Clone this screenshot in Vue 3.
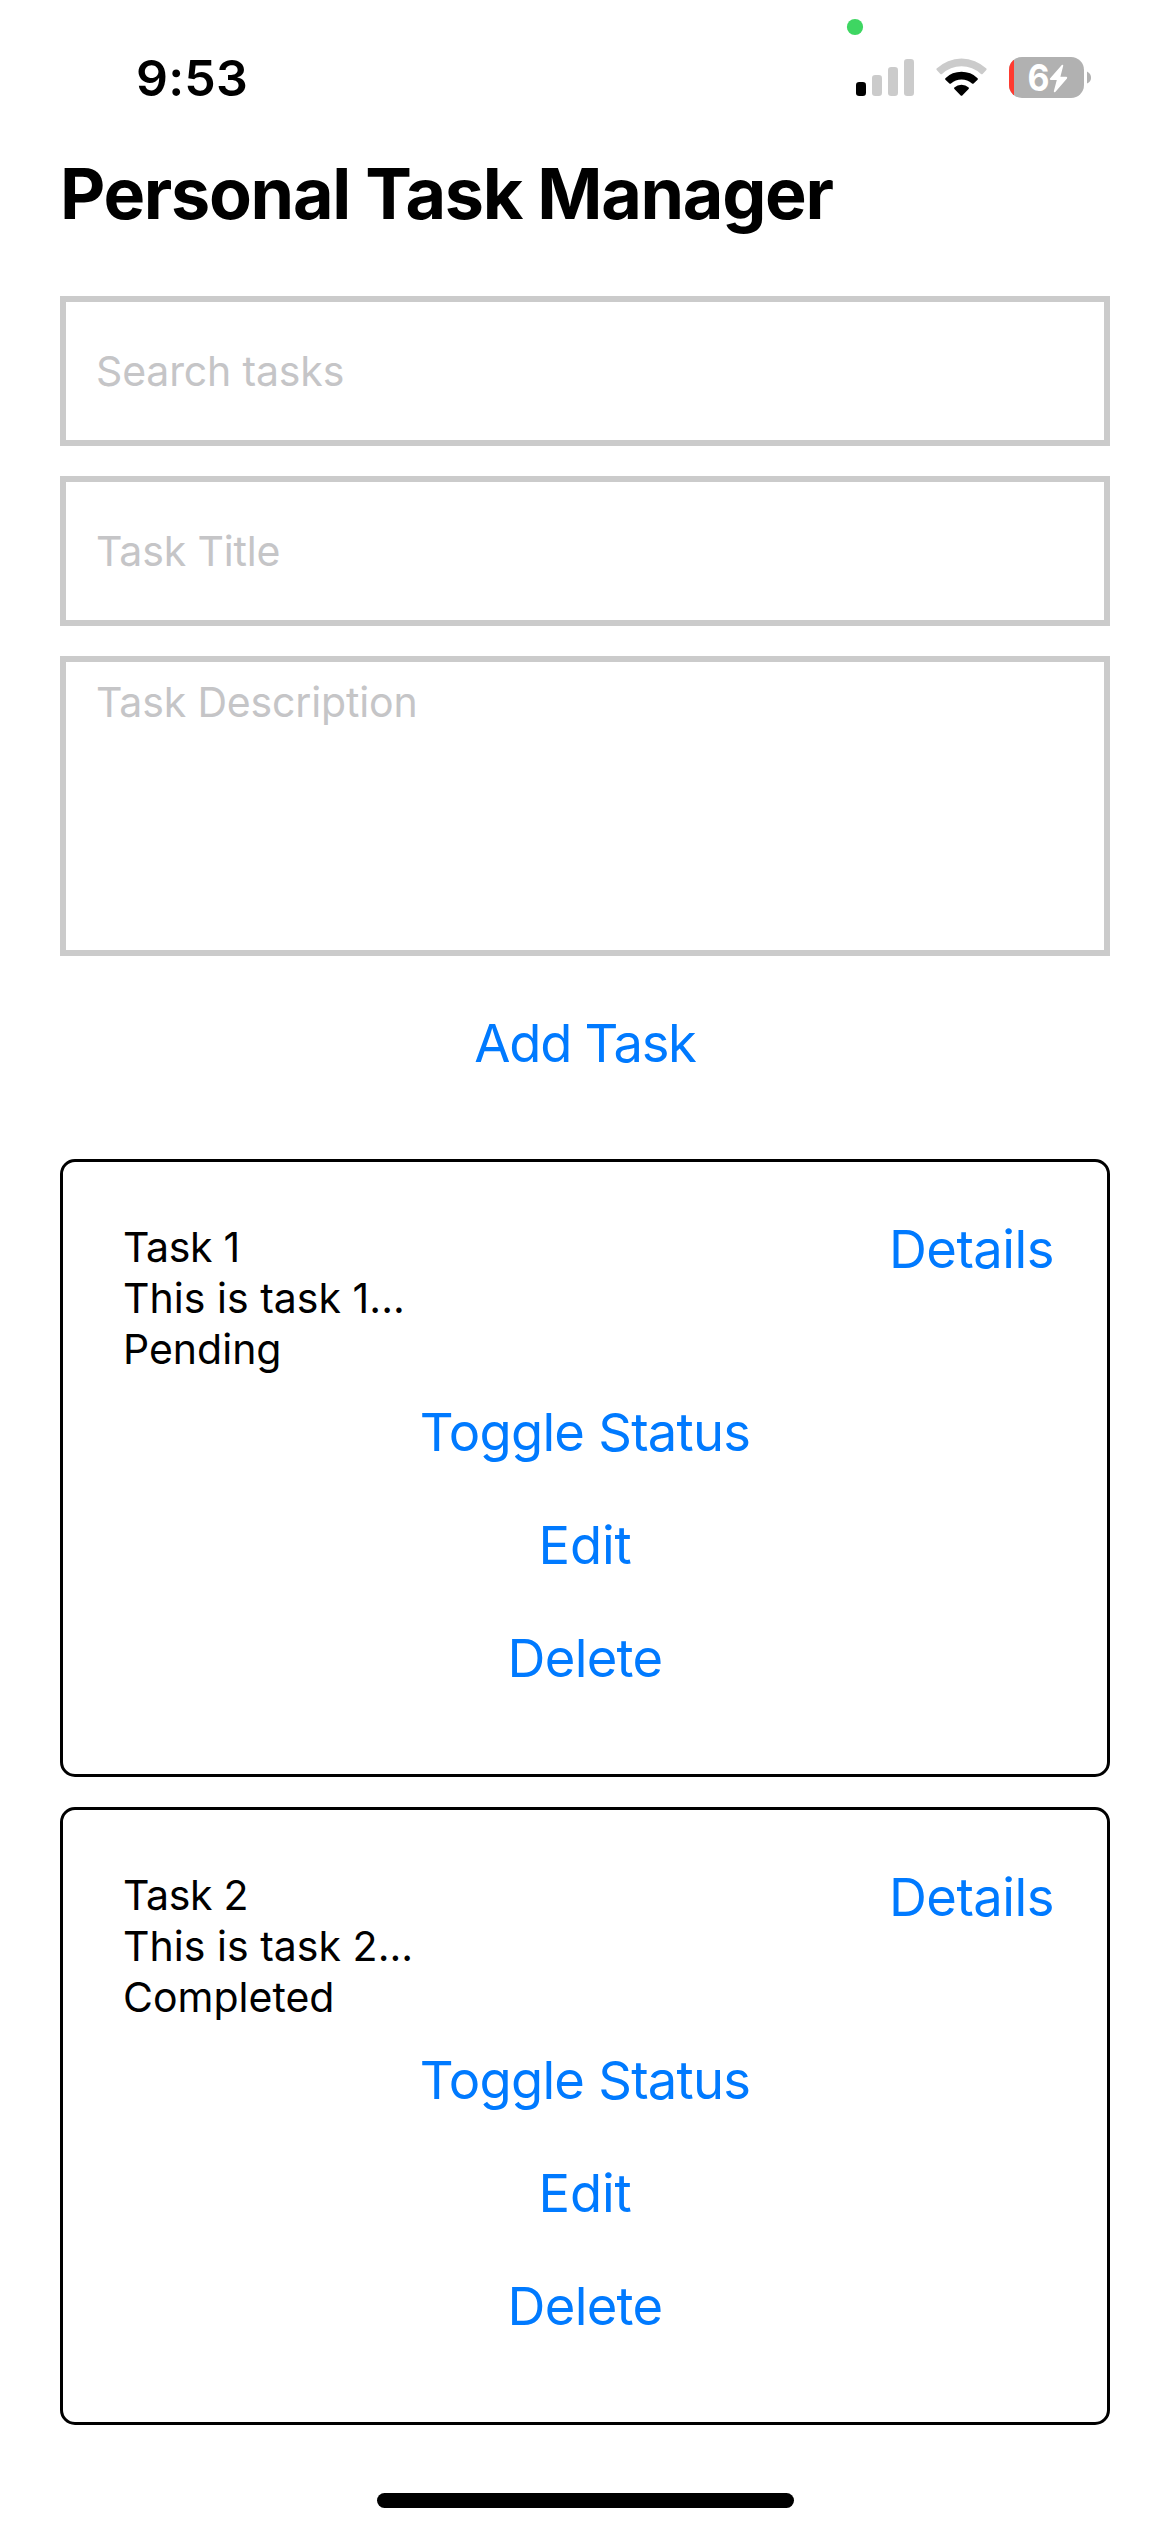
<script setup>
import { ref } from 'vue'

const search = ref('')
const title = ref('')
const description = ref('')

const tasks = [
  { id: 1, title: 'Task 1', summary: 'This is task 1...', status: 'Pending' },
  { id: 2, title: 'Task 2', summary: 'This is task 2...', status: 'Completed' },
]
</script>

<template>
  <div class="screen">
    <header class="status">
      <span class="time">9:53</span>
      <svg class="indicators" width="250" height="110" viewBox="850 0 250 110">
        <circle cx="855" cy="27" r="8.1" fill="#3ed662" />
        <rect x="856" y="82" width="10" height="14" rx="3.2" fill="#000" />
        <g fill="#cbcbcb">
          <rect x="872" y="75" width="10" height="21" rx="3.2" />
          <rect x="888" y="67" width="10" height="29" rx="3.2" />
          <rect x="904" y="59" width="10" height="37" rx="3.2" />
        </g>
        <path fill="#cbcbcb" d="M936.6 68.6Q936 69.4 936.7 70.1L940.4 73.9Q941.2 74.6 942 73.9A28.5 28.5 0 0 1 981 73.9Q981.8 74.6 982.6 73.9L986.3 70.1Q987 69.4 986.4 68.6A36 36 0 0 0 936.6 68.6Z" />
        <path d="M945.4 78.2Q944.8 79 945.4 79.7L949.4 83.5Q950.2 84.2 951 83.5A16 16 0 0 1 972 83.5Q972.8 84.2 973.6 83.5L977.6 79.7Q978.2 79 977.6 78.2A23 23 0 0 0 945.4 78.2Z" />
        <path d="M954.3 87.6Q953.7 88.4 954.4 89.1L960.7 95.5Q961.5 96.2 962.3 95.5L968.6 89.1Q969.3 88.4 968.7 87.6A10.8 10.8 0 0 0 954.3 87.6Z" />
        <clipPath id="cell"><rect x="1009" y="57" width="75" height="41" rx="13" /></clipPath>
        <g clip-path="url(#cell)">
          <rect x="1009" y="57" width="75" height="41" fill="#b1b1b1" />
          <rect x="1009" y="57" width="5" height="41" fill="#ff3b30" />
        </g>
        <path fill="#b1b1b1" d="M1087 71.5Q1091 73.5 1091 77.7T1087 83.5Z" />
        <text x="1027.500" y="90.500" textLength="22" lengthAdjust="spacingAndGlyphs" class="level">6</text>
        <path fill="#fff" d="M1061.8 65L1050 78.6Q1049.4 80 1050.8 80H1056.8L1053.8 91.3Q1054 92.700 1055.300 91.900L1067 78.400Q1067.700 77 1066.300 76.800H1060.400L1063.300 65.600Q1063 64.300 1061.800 65Z" />
      </svg>
    </header>

    <main class="content">
      <h1 class="heading">Personal Task Manager</h1>
      <form class="form" @submit.prevent>
        <input v-model="search" class="field search" placeholder="Search tasks" />
        <input v-model="title" class="field title" placeholder="Task Title" />
        <textarea v-model="description" class="field description" placeholder="Task Description"></textarea>
        <button class="link add">Add Task</button>
      </form>

      <section class="tasks">
        <article v-for="task in tasks" :key="task.id" class="card">
          <div class="top">
            <div class="info">
              <p class="name">{{ task.title }}</p>
              <p class="summary">{{ task.summary }}</p>
              <p class="state">{{ task.status }}</p>
            </div>
            <button class="link details">Details</button>
          </div>
          <button class="link toggle">Toggle Status</button>
          <button class="link edit">Edit</button>
          <button class="link delete">Delete</button>
        </article>
      </section>
    </main>
    <div class="home"></div>
  </div>
</template>

<style>
body {
  margin: 0;
  background: #fff;
}
</style>

<style scoped>
.screen {
  box-sizing: border-box;
  width: 1170px;
  height: 2532px;
  overflow: hidden;
  display: flex;
  flex-direction: column;
  background: #fff;
  color: #000;
  font-family: Inter, 'Liberation Sans', sans-serif;
  font-size: 41px;
  line-height: 51px;
}
.status {
  display: flex;
  justify-content: space-between;
  height: 150px;
  padding: 0 70px 0 136px;
}
.time {
  margin-top: 48px;
  font-size: 50px;
  font-weight: 600;
  line-height: 60px;
  letter-spacing: 0.2px;
}
.indicators {
  overflow: visible;
}
.level {
  font: 700 37px Inter, sans-serif;
  fill: #fff;
}
.content {
  padding: 0 60px;
}
.heading {
  margin: 0 0 59px;
  font-size: 70px;
  font-weight: 700;
  line-height: 87px;
  letter-spacing: -1.3px;
  white-space: nowrap;
}
.form {
  display: flex;
  flex-direction: column;
  gap: 30px;
  margin-bottom: 60px;
}
.field {
  box-sizing: border-box;
  width: 100%;
  height: 150px;
  margin: 0;
  padding: 0 30px;
  border: 6px solid #cbcbcb;
  border-radius: 0;
  background: #fff;
  outline: none;
  font: inherit;
  letter-spacing: -0.15px;
}
.field::placeholder {
  color: #c5c5c7;
  opacity: 1;
}
.description {
  height: 300px;
  padding: 15px 30px;
  resize: none;
}
.link {
  height: 113px;
  margin: 0;
  padding: 2px 0 0;
  border: 0;
  background: none;
  color: #007aff;
  font: 400 52.5px/111px Inter, sans-serif;
  white-space: nowrap;
}
.add {
  letter-spacing: -1.25px;
}
.toggle {
  letter-spacing: -0.75px;
}
.edit {
  letter-spacing: -0.2px;
}
.delete {
  letter-spacing: -0.7px;
}
.tasks {
  display: flex;
  flex-direction: column;
  gap: 30px;
}
.card {
  box-sizing: border-box;
  display: flex;
  flex-direction: column;
  height: 618px;
  padding: 60px;
  border: 3px solid #000;
  border-radius: 15px;
}
.top {
  display: flex;
  justify-content: space-between;
  height: 153px;
}
.info p {
  margin: 0;
}
.name {
  letter-spacing: -0.35px;
}
.summary {
  letter-spacing: 0.03px;
}
.details {
  margin: -30px -7px 0 0;
  letter-spacing: -0.5px;
}
.home {
  width: 417px;
  height: 15px;
  margin: auto auto 24px;
  border-radius: 8px;
  background: #000;
}
</style>
